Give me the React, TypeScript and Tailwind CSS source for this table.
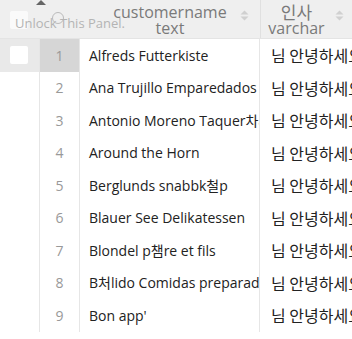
const rows = [
  "Alfreds Futterkiste",
  "Ana Trujillo Emparedados y helados",
  "Antonio Moreno Taquer차a",
  "Around the Horn",
  "Berglunds snabbk철p",
  "Blauer See Delikatessen",
  "Blondel p챔re et fils",
  "B처lido Comidas preparadas",
  "Bon app'",
];

const font = { fontFamily: '"Segoe UI", "Open Sans", "Noto Sans CJK KR", sans-serif' };
const kr = { fontFamily: '"Noto Sans CJK KR", sans-serif' };

function SortIcon() {
  return (
    <svg width="9" height="11" viewBox="0 0 9 11" className="shrink-0">
      <path d="M4.5 0.5 L8.5 4.5 L0.5 4.5 Z" fill="#d0d0d0" />
      <path d="M4.5 10.5 L8.5 6.5 L0.5 6.5 Z" fill="#d0d0d0" />
    </svg>
  );
}

export default function App() {
  return (
    <div className="w-[352px] h-[339px] overflow-hidden bg-white text-[#222]" style={font}>
      {/* header */}
      <div className="relative flex h-[39px] bg-[#efefef] border-b border-[#e4e4e4]">
        <div className="w-[80px] shrink-0" />
        <div className="relative w-[180px] shrink-0 flex flex-col items-center justify-center leading-[16px] text-[16px] text-[#7a7a7a] pt-[1px]">
          <span>customername</span>
          <span>text</span>
          <div className="absolute right-[11px] top-[10px]">
            <SortIcon />
          </div>
        </div>
        <div className="relative w-[100px] shrink-0 border-l border-[#e0e0e0] flex flex-col items-center justify-center pr-[28px] leading-[16px] text-[16px] text-[#7a7a7a] pt-[1px]">
          <span className="text-[17px] leading-[17px]" style={kr}>인사</span>
          <span>varchar</span>
          <div className="absolute left-[74px] top-[10px]">
            <SortIcon />
          </div>
        </div>

        {/* overlay: lock panel */}
        <div className="absolute left-[36px] top-0 w-0 h-0 border-l-[5px] border-r-[5px] border-b-[5px] border-l-transparent border-r-transparent border-b-[#666]" />
        <div className="absolute left-[10px] top-[11px] w-[18px] h-[18px] rounded-[2px] bg-white/70" />
        <div className="absolute left-[52px] top-[12px] w-[12px] h-[12px] rounded-full border border-[#bbb]" />
        <div className="absolute left-[15px] top-[14px] text-[13px] leading-[18px] text-[#b4b4b4] whitespace-nowrap">
          Unlock This Panel.
        </div>
      </div>

      {/* rows */}
      {rows.map((name, i) => (
        <div key={i} className="flex h-[32.5px]">
          <div
            className={`w-[40px] shrink-0 border-r border-[#e6e6e6] flex items-center justify-center ${
              i === 0 ? "bg-[#e9e9e9]" : ""
            }`}
          >
            {i === 0 && <div className="w-[18px] h-[18px] rounded-[2px] bg-white ml-[-1px]" />}
          </div>
          <div
            className={`w-[40px] shrink-0 border-r border-[#e6e6e6] flex items-center justify-center text-[14px] text-[#999] ${
              i === 0 ? "bg-[#d6d6d6]" : ""
            }`}
          >
            {i + 1}
          </div>
          <div className="w-[180px] shrink-0 border-r border-[#e6e6e6] flex items-center pl-[9px] text-[14px] whitespace-nowrap overflow-hidden">
            {name}
          </div>
          <div className="flex-1 flex items-center pl-[11px] text-[16px] whitespace-nowrap overflow-hidden" style={kr}>
            님 안녕하세요
          </div>
        </div>
      ))}
    </div>
  );
}
